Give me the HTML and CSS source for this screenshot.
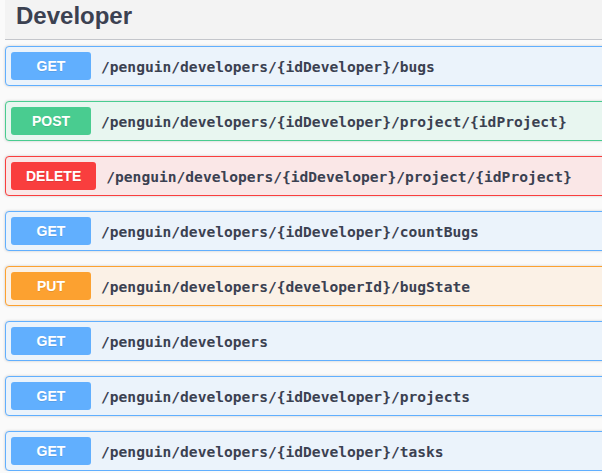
FILE: index.html
```html
<!DOCTYPE html>
<html lang="en">
<head>
<meta charset="utf-8">
<title>Developer</title>
<link rel="stylesheet" href="styles.css">
</head>
<body>
<div class="tag-section">
  <h3 class="tag-title">Developer</h3>
  <div class="ops">
    <div class="op op-get"><span class="method">GET</span><span class="path">/penguin/developers/{idDeveloper}/bugs</span></div>
    <div class="op op-post"><span class="method">POST</span><span class="path">/penguin/developers/{idDeveloper}/project/{idProject}</span></div>
    <div class="op op-delete"><span class="method">DELETE</span><span class="path">/penguin/developers/{idDeveloper}/project/{idProject}</span></div>
    <div class="op op-get"><span class="method">GET</span><span class="path">/penguin/developers/{idDeveloper}/countBugs</span></div>
    <div class="op op-put"><span class="method">PUT</span><span class="path">/penguin/developers/{developerId}/bugState</span></div>
    <div class="op op-get"><span class="method">GET</span><span class="path">/penguin/developers</span></div>
    <div class="op op-get"><span class="method">GET</span><span class="path">/penguin/developers/{idDeveloper}/projects</span></div>
    <div class="op op-get"><span class="method">GET</span><span class="path">/penguin/developers/{idDeveloper}/tasks</span></div>
  </div>
</div>
</body>
</html>
```

FILE: styles.css
```css
html, body {
  margin: 0;
  padding: 0;
  background: #fafafa;
  overflow: hidden;
}

.tag-section {
  padding-left: 5px;
  min-width: 640px;
}

.tag-title {
  margin: 0;
  height: 40px;
  box-sizing: border-box;
  padding-left: 11px;
  line-height: 32px;
  font-family: "Liberation Sans", Arial, sans-serif;
  font-weight: 700;
  font-size: 24px;
  color: #3b4151;
  background: #f3f3f3;
  border-bottom: 1px solid #c4c6cb;
}

.ops {
  padding-top: 6px;
  display: flex;
  flex-direction: column;
  gap: 15px;
}

.op {
  display: flex;
  align-items: center;
  height: 40px;
  box-sizing: border-box;
  padding: 0 5px;
  border: 1px solid;
  border-radius: 4px;
  box-shadow: 0 0 3px rgba(0, 0, 0, 0.19);
}

.method {
  min-width: 80px;
  box-sizing: border-box;
  padding: 0 15px;
  height: 28px;
  line-height: 28px;
  text-align: center;
  border-radius: 3px;
  color: #fff;
  font-family: "Liberation Sans", Arial, sans-serif;
  font-weight: 700;
  font-size: 14px;
  text-shadow: 0 1px 0 rgba(0, 0, 0, 0.1);
}

.path {
  padding-left: 10px;
  font-family: "DejaVu Sans Mono", "Liberation Mono", monospace;
  font-weight: 700;
  font-size: 14.6px;
  color: #3b4151;
  white-space: nowrap;
}

.op-get { background: #ebf3fb; border-color: #61affe; }
.op-get .method { background: #61affe; }

.op-post { background: #e8f6f0; border-color: #49cc90; }
.op-post .method { background: #49cc90; }

.op-delete { background: #fae7e7; border-color: #f93e3e; }
.op-delete .method { background: #f93e3e; }

.op-put { background: #fbf1e6; border-color: #fca130; }
.op-put .method { background: #fca130; }
```
